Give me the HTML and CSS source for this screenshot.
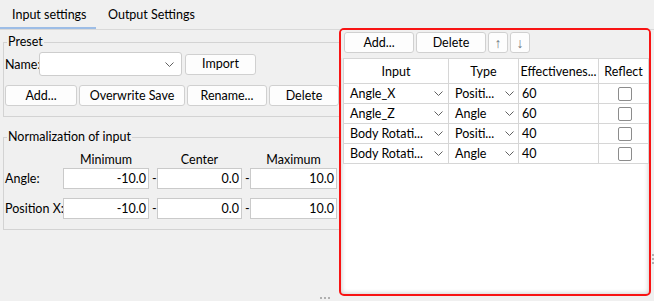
FILE: index.html
```html
<!DOCTYPE html>
<html>
<head>
<meta charset="utf-8">
<link rel="stylesheet" href="styles.css">
</head>
<body>
<div class="window">
  <div class="tabs">
    <div class="tab active">Input settings</div>
    <div class="tab">Output Settings</div>
  </div>
  <div class="main">
    <div class="left">
      <fieldset class="group preset">
        <legend>Preset</legend>
        <div class="name-row">
          <span class="name-lbl">Name:</span>
          <div class="combo">
            <svg class="chev" width="9" height="5" viewBox="0 0 9 5"><polyline points="0.5,0.5 4.5,4.5 8.5,0.5" fill="none" stroke="#606060" stroke-width="1"/></svg>
          </div>
          <button class="btn import">Import</button>
        </div>
        <div class="btn-row">
          <button class="btn b-add">Add...</button>
          <button class="btn b-over">Overwrite Save</button>
          <button class="btn b-ren">Rename...</button>
          <button class="btn b-del">Delete</button>
        </div>
      </fieldset>
      <fieldset class="group norm">
        <legend>Normalization of input</legend>
        <div class="nrow nhead">
          <span class="nlabel"></span>
          <span class="hdr f1">Minimum</span>
          <span class="dash"></span>
          <span class="hdr f2">Center</span>
          <span class="dash"></span>
          <span class="hdr f3">Maximum</span>
        </div>
        <div class="nrow">
          <span class="nlabel">Angle:</span>
          <div class="field f1">-10.0</div>
          <span class="dash">-</span>
          <div class="field f2">0.0</div>
          <span class="dash">-</span>
          <div class="field f3">10.0</div>
        </div>
        <div class="nrow second">
          <span class="nlabel">Position X:</span>
          <div class="field f1">-10.0</div>
          <span class="dash">-</span>
          <div class="field f2">0.0</div>
          <span class="dash">-</span>
          <div class="field f3">10.0</div>
        </div>
      </fieldset>
    </div>
    <div class="right">
      <div class="toolbar">
        <button class="btn t-add">Add...</button>
        <button class="btn t-del">Delete</button>
        <button class="btn t-arr">↑</button>
        <button class="btn t-arr">↓</button>
      </div>
      <div class="table">
        <div class="cell th">Input</div>
        <div class="cell th">Type</div>
        <div class="cell th">Effectivenes...</div>
        <div class="cell th">Reflect</div>

        <div class="cell cb"><span>Angle_X</span><svg class="chev" width="9" height="5" viewBox="0 0 9 5"><polyline points="0.5,0.5 4.5,4.5 8.5,0.5" fill="none" stroke="#606060" stroke-width="1"/></svg></div>
        <div class="cell cb type"><span>Positi...</span><svg class="chev" width="9" height="5" viewBox="0 0 9 5"><polyline points="0.5,0.5 4.5,4.5 8.5,0.5" fill="none" stroke="#606060" stroke-width="1"/></svg></div>
        <div class="cell num">60</div>
        <div class="cell chk"><span class="box"></span></div>

        <div class="cell cb"><span>Angle_Z</span><svg class="chev" width="9" height="5" viewBox="0 0 9 5"><polyline points="0.5,0.5 4.5,4.5 8.5,0.5" fill="none" stroke="#606060" stroke-width="1"/></svg></div>
        <div class="cell cb type"><span>Angle</span><svg class="chev" width="9" height="5" viewBox="0 0 9 5"><polyline points="0.5,0.5 4.5,4.5 8.5,0.5" fill="none" stroke="#606060" stroke-width="1"/></svg></div>
        <div class="cell num">60</div>
        <div class="cell chk"><span class="box"></span></div>

        <div class="cell cb"><span>Body Rotati...</span><svg class="chev" width="9" height="5" viewBox="0 0 9 5"><polyline points="0.5,0.5 4.5,4.5 8.5,0.5" fill="none" stroke="#606060" stroke-width="1"/></svg></div>
        <div class="cell cb type"><span>Positi...</span><svg class="chev" width="9" height="5" viewBox="0 0 9 5"><polyline points="0.5,0.5 4.5,4.5 8.5,0.5" fill="none" stroke="#606060" stroke-width="1"/></svg></div>
        <div class="cell num">40</div>
        <div class="cell chk"><span class="box"></span></div>

        <div class="cell cb"><span>Body Rotati...</span><svg class="chev" width="9" height="5" viewBox="0 0 9 5"><polyline points="0.5,0.5 4.5,4.5 8.5,0.5" fill="none" stroke="#606060" stroke-width="1"/></svg></div>
        <div class="cell cb type"><span>Angle</span><svg class="chev" width="9" height="5" viewBox="0 0 9 5"><polyline points="0.5,0.5 4.5,4.5 8.5,0.5" fill="none" stroke="#606060" stroke-width="1"/></svg></div>
        <div class="cell num">40</div>
        <div class="cell chk"><span class="box"></span></div>
      </div>
    </div>
  </div>
  <span class="grip-bottom"></span>
  <span class="grip-right"></span>
</div>
</body>
</html>
```

FILE: styles.css
```css
* { box-sizing: border-box; }
html, body { margin: 0; padding: 0; }
body {
  background: #f0f0f0;
  font-family: "Lato", "Noto Sans", sans-serif;
  font-size: 12.5px;
  color: #000;
  width: 654px;
  height: 301px;
  overflow: hidden;
  white-space: nowrap;
}
.window { position: relative; width: 654px; height: 301px; }

.tabs {
  display: flex;
  height: 30px;
  border-bottom: 1px solid #d9d9d9;
}
.tab {
  height: 29px;
  line-height: 30px;
  padding: 0 0 0 12px;
}
.tab.active {
  width: 96px;
  border-bottom: 2px solid #9dbde6;
}

.main {
  display: flex;
  height: 271px;
}
.left {
  width: 339px;
  flex: none;
  overflow: hidden;
}
.group {
  margin: 0 0 0 3px;
  width: 345px;
  border: 1px solid #d3d3d3;
  padding: 2px 0 10px 1px;
  min-width: 0;
}
.group legend {
  margin-left: 2px;
  padding: 0 1px;
  line-height: 16px;
  height: 16px;
}
.preset { margin-top: 4px; }
.norm { margin-top: 12px; padding-top: 5px; padding-bottom: 10px; }

.name-row { display: flex; align-items: center; height: 24px; }
.name-lbl { width: 34px; flex: none; }
.combo {
  width: 143px;
  height: 24px;
  background: #fff;
  border: 1px solid #cdcdcd;
  border-radius: 3px;
  display: flex;
  align-items: center;
  justify-content: flex-end;
  padding-right: 7px;
}
.btn {
  font-family: inherit;
  font-size: 12.5px;
  color: #000;
  background: #fdfdfd;
  border: 1px solid #d0d0d0;
  border-radius: 3px;
  height: 21px;
  padding: 0;
  margin: 0;
  line-height: 18px;
}
.import { width: 71px; margin-left: 3px; }
.btn-row { display: flex; gap: 2px; margin-top: 9px; }
.b-add { width: 72px; }
.b-over { width: 106px; }
.b-ren { width: 80px; }
.b-del { width: 70px; }

.nrow { display: flex; align-items: center; height: 21px; }
.nhead { height: 18px; line-height: 19px; }
.nrow.second { margin-top: 9px; }
.nlabel { width: 58px; flex: none; }
.f1 { width: 86px; }
.f2 { width: 85px; }
.f3 { width: 87px; }
.hdr { text-align: center; flex: none; }
.dash { width: 8px; flex: none; padding-left: 3px; }
.field {
  flex: none;
  height: 21px;
  background: #fff;
  border: 1px solid #cacaca;
  text-align: right;
  padding-right: 2px;
  line-height: 19px;
}

.right {
  width: 312px;
  height: 268px;
  margin-top: -2px;
  border: 2px solid #f81414;
  border-radius: 5px;
  background: #fff;
  box-shadow: inset 0 0 5px rgba(0, 0, 0, 0.25);
  overflow: hidden;
  flex: none;
}
.toolbar {
  display: flex;
  gap: 2px;
  height: 28px;
  padding: 2px 0 0 3px;
  background: #f0f0f0;
}
.t-add, .t-del { width: 70px; }
.t-arr { width: 20px; color: #6f7780; font-size: 14px; font-family: "Liberation Sans", sans-serif; line-height: 18px; }

.table {
  margin-left: 2px;
  width: 306px;
  display: grid;
  grid-template-columns: 105px 70px 80px 50px;
  grid-template-rows: 25px repeat(4, 20px);
  border-left: 1px solid #d6d6d6;
  border-top: 1px solid #d6d6d6;
  background: #fff;
}
.cell {
  border-right: 1px solid #d6d6d6;
  border-bottom: 1px solid #d6d6d6;
  display: flex;
  align-items: center;
  overflow: hidden;
}
.th { justify-content: center; }
.cb { justify-content: space-between; padding: 0 5px 0 6px; }
.cb.type { padding: 0 4px 0 6px; }
.num { padding-left: 3px; }
.chk { justify-content: center; padding-left: 2px; }
.box {
  width: 14px;
  height: 14px;
  border: 1px solid #8c8c8c;
  border-radius: 2px;
  background: #fff;
}

.grip-bottom {
  position: absolute;
  left: 320px;
  top: 297px;
  width: 11px;
  height: 2px;
  background: repeating-linear-gradient(90deg, #b0b0b0 0 2px, transparent 2px 4px);
}
.grip-right {
  position: absolute;
  left: 652px;
  top: 254px;
  width: 2px;
  height: 11px;
  background: repeating-linear-gradient(#b0b0b0 0 2px, transparent 2px 4px);
}
```
